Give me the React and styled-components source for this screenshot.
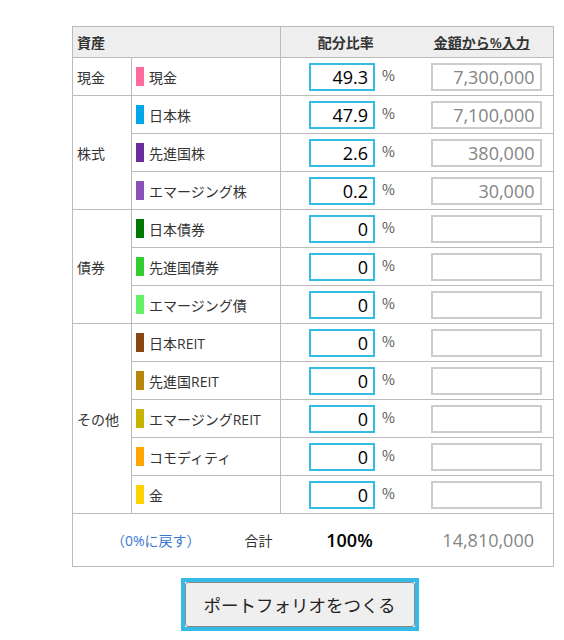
import React from 'react'
import styled, {createGlobalStyle} from 'styled-components'

const GlobalStyle = createGlobalStyle`
  body {
    margin: 0;
    background: #fff;
    font-family: "Open Sans", "Noto Sans CJK JP", sans-serif;
    color: #333;
  }
`

const groups = [
  {name: '現金', items: [{label: '現金', color: '#ff6b9a', pct: '49.3', amount: '7,300,000'}]},
  {name: '株式', items: [
    {label: '日本株', color: '#00a7e8', pct: '47.9', amount: '7,100,000'},
    {label: '先進国株', color: '#6b2c9e', pct: '2.6', amount: '380,000'},
    {label: 'エマージング株', color: '#8a52b6', pct: '0.2', amount: '30,000'},
  ]},
  {name: '債券', items: [
    {label: '日本債券', color: '#007800', pct: '0', amount: ''},
    {label: '先進国債券', color: '#33cc33', pct: '0', amount: ''},
    {label: 'エマージング債', color: '#66f066', pct: '0', amount: ''},
  ]},
  {name: 'その他', items: [
    {label: '日本REIT', color: '#8b4513', pct: '0', amount: ''},
    {label: '先進国REIT', color: '#b8860b', pct: '0', amount: ''},
    {label: 'エマージングREIT', color: '#c8b400', pct: '0', amount: ''},
    {label: 'コモディティ', color: '#ffa500', pct: '0', amount: ''},
    {label: '金', color: '#ffd200', pct: '0', amount: ''},
  ]},
]

const App = () => {
  return (
    <>
      <GlobalStyle/>
      <Page>
        <Table>
          <colgroup>
            <col style={{width: 59}}/>
            <col style={{width: 149}}/>
            <col style={{width: 130}}/>
            <col/>
          </colgroup>
          <thead>
            <tr>
              <HeadCell colSpan={2}>資産</HeadCell>
              <HeadCell center divider>配分比率</HeadCell>
              <HeadCell center><Underline>金額から%入力</Underline></HeadCell>
            </tr>
          </thead>
          <tbody>
            {groups.map(group => group.items.map((item, i) => (
              <Row key={item.label}>
                {i === 0 && <GroupCell rowSpan={group.items.length}>{group.name}</GroupCell>}
                <LabelCell>
                  <Label>
                    <Swatch color={item.color}/>
                    {item.label}
                  </Label>
                </LabelCell>
                <PctCell>
                  <PctWrap>
                    <PctInput defaultValue={item.pct}/>
                    <PctSign>%</PctSign>
                  </PctWrap>
                </PctCell>
                <AmountCell>
                  <AmountInput defaultValue={item.amount}/>
                </AmountCell>
              </Row>
            )))}
            <FootRow>
              <FootCell colSpan={2}>
                <FootLeft>
                  <ResetLink href="#">（0%に戻す）</ResetLink>
                  <TotalLabel>合計</TotalLabel>
                </FootLeft>
              </FootCell>
              <FootCell>
                <TotalPct>100%</TotalPct>
              </FootCell>
              <FootCell>
                <TotalAmount>14,810,000</TotalAmount>
              </FootCell>
            </FootRow>
          </tbody>
        </Table>
        <ButtonRow>
          <Outline>
            <MakeButton>ポートフォリオをつくる</MakeButton>
          </Outline>
        </ButtonRow>
      </Page>
    </>
  )
}

export default App

const Page = styled.div`
  padding: 26px 0 0 72px;
`

const Table = styled.table`
  width: 482px;
  table-layout: fixed;
  border-collapse: collapse;
  border: 1px solid #bbb;
  font-size: 14px;
`

const HeadCell = styled.th`
  height: 30px;
  padding: 0 4px;
  background: #eee;
  border-bottom: 1px solid #bbb;
  border-left: ${props => props.divider ? '1px solid #bbb' : 'none'};
  text-align: ${props => props.center ? 'center' : 'left'};
  font-weight: 600;
  color: #333;
  font-size: 14px;
`

const Underline = styled.span`
  text-decoration: underline;
`

const Row = styled.tr`
  height: 38px;
`

const GroupCell = styled.td`
  padding: 0 4px;
  border: 1px solid #bbb;
  color: #333;
`

const LabelCell = styled.td`
  padding: 0 4px;
  border: 1px solid #bbb;
  height: 37px;
`

const Label = styled.div`
  display: flex;
  align-items: center;
  gap: 5px;
  color: #333;
  white-space: nowrap;
`

const Swatch = styled.span`
  width: 8px;
  height: 19px;
  background: ${props => props.color};
  flex-shrink: 0;
`

const PctCell = styled.td`
  padding: 0;
  border-top: 1px solid #bbb;
  border-bottom: 1px solid #bbb;
  border-left: 1px solid #bbb;
`

const PctWrap = styled.div`
  display: flex;
  align-items: center;
  gap: 7px;
  padding-left: 28px;
`

const PctInput = styled.input`
  box-sizing: border-box;
  width: 66px;
  height: 28px;
  border: 2px solid #36bbe9;
  padding: 0 5px;
  text-align: right;
  font-family: "Open Sans", sans-serif;
  font-size: 18px;
  color: #000;
  background: #fff;
  outline: none;
`

const PctSign = styled.span`
  font-family: "Noto Sans CJK JP", sans-serif;
  font-size: 14px;
  color: #555;
  margin-top: -4px;
`

const AmountCell = styled.td`
  padding: 0 0 0 20px;
  border-top: 1px solid #bbb;
  border-bottom: 1px solid #bbb;
`

const AmountInput = styled.input`
  box-sizing: border-box;
  width: 111px;
  height: 28px;
  border: 2px solid #ccc;
  padding: 0 5px;
  text-align: right;
  font-family: "Open Sans", sans-serif;
  font-size: 18px;
  color: #858585;
  background: #fff;
  outline: none;
`

const FootRow = styled.tr`
  height: 53px;
`

const FootCell = styled.td`
  padding: 0;
`

const FootLeft = styled.div`
  display: flex;
  align-items: center;
  padding-left: 38px;
  gap: 44px;
`

const ResetLink = styled.a`
  color: #3a78d2;
  text-decoration: none;
  font-size: 14px;
`

const TotalLabel = styled.span`
  font-size: 14px;
  color: #333;
`

const TotalPct = styled.div`
  text-align: center;
  padding-left: 8px;
  font-size: 18px;
  font-weight: 600;
  color: #000;
`

const TotalAmount = styled.div`
  text-align: right;
  padding-right: 19px;
  font-size: 18px;
  color: #858585;
`

const ButtonRow = styled.div`
  width: 455px;
  display: flex;
  justify-content: center;
  margin-top: 11px;
`

const Outline = styled.div`
  border: 4px solid #36bbe9;
`

const MakeButton = styled.button`
  display: block;
  box-sizing: border-box;
  width: 230px;
  height: 45px;
  border: 1px solid #8a8a8a;
  border-radius: 3px;
  background: #efefef;
  font-family: "Noto Sans CJK JP", sans-serif;
  font-size: 17.5px;
  color: #222;
  cursor: pointer;
`
